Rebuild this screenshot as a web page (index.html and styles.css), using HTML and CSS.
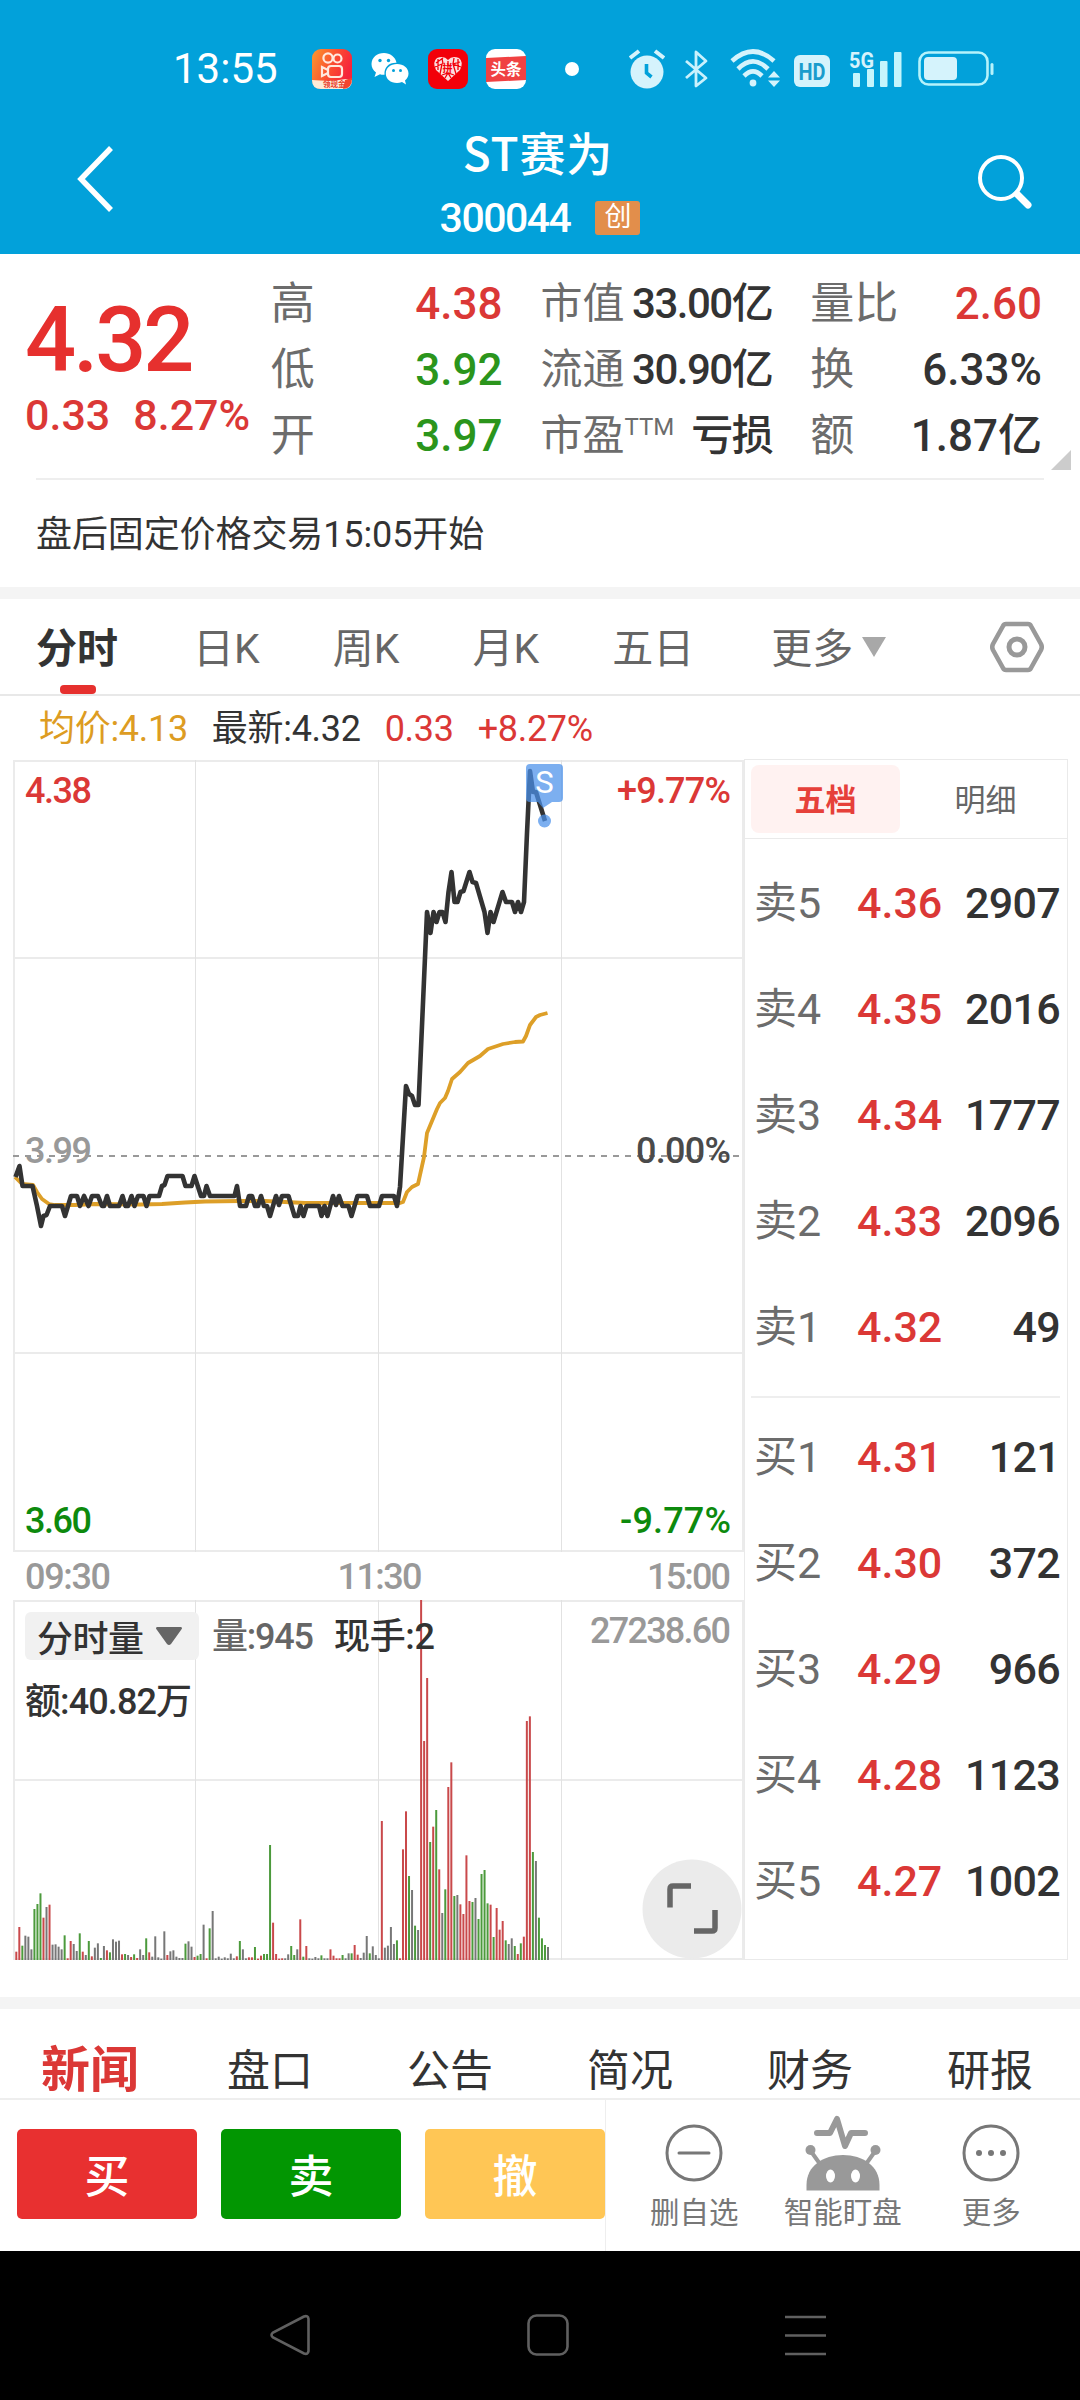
FILE: index.html
```html
<!DOCTYPE html>
<html lang="zh-CN">
<head>
  <meta charset="UTF-8" />
  <title>ST赛为 300044</title>
  <link rel="stylesheet" href="styles.css">
</head>
<body>
  <header class="top">
    <div class="status">
      <span class="clock">13:55</span>
      <svg class="app kuaishou" width="40" height="40" viewBox="0 0 40 40">
        <defs>
          <linearGradient id="ks" x1="0" y1="0" x2="1" y2="0.4">
            <stop offset="0" stop-color="#fb9a2c" />
            <stop offset="0.6" stop-color="#fb4a32" />
            <stop offset="1" stop-color="#f5243c" />
          </linearGradient>
        </defs>
        <rect width="40" height="40" rx="9" fill="url(#ks)" />
        <path d="M0 31 Q20 33 34 30 L40 31 Q40 40 31 40 H9 Q0 40 0 31z" fill="#fdebd8" />
        <path d="M33 31 L40 29 Q40 40 31 40z" fill="#f4452e" />
        <g fill="none" stroke="#ffe9df" stroke-width="2.2">
          <circle cx="16" cy="9" r="4.6" />
          <circle cx="25.5" cy="9.5" r="4" />
          <rect x="16" y="17" width="14" height="11" rx="3" />
          <path d="M16 21 L10 18 V27 L16 24" />
        </g>
        <text x="11" y="38" font-size="7.5" font-weight="700" fill="#e8402c">领现金</text>
      </svg>
      <svg class="app wechat" width="38" height="34" viewBox="0 0 38 34">
        <path d="M13 1 C6 1 0.5 5.600 0.500 12 C0.500 15.500 2.200 18.500 5 20.500 L3.500 25 L9 22.300 Q11 23 13.500 22.800 C13 15 18 10.500 25.500 10.800 C24.500 5 19 1 13 1z" fill="#fff" />
        <path d="M26 12 C19.500 12 14.800 16 14.800 21.500 C14.800 27 19.500 31 26 31 Q28.500 31 31 30 L35 32.500 L34 28.500 C36.300 26.700 37.500 24.300 37.500 21.500 C37.500 16 32.500 12 26 12z" fill="#fff" />
        <g fill="#02a1da">
          <circle cx="9" cy="8.500" r="1.700" /><circle cx="17.500" cy="8.500" r="1.700" />
          <circle cx="22.500" cy="18.500" r="1.500" /><circle cx="29.500" cy="18.500" r="1.500" />
        </g>
      </svg>
      <svg class="app heart" width="40" height="40" viewBox="0 0 40 40">
        <rect width="40" height="40" rx="9" fill="#f20009" />
        <path d="M20 32 L8 21 Q4 13 9 9 Q16 6 20 11 Q24 6 31 9 Q36 13 32 21z" fill="#fbdede" />
        <path d="M8 14 L15 9 M7 18 L14 15 L12 25 M14 9 L15 15 M26 9 L25 15 L33 18 M32 13 L25 15 L28 25 M14 26 L20 24 L26 26 M17 29 L20 24 L23 29 M10 10 L10 21 M30 10 V21 M20 12 V16" stroke="#f20009" stroke-width="1.300" fill="none" />
        <text x="14.500" y="23" font-size="10" font-weight="700" fill="#f20009">拼</text>
      </svg>
      <svg class="app toutiao" width="40" height="40" viewBox="0 0 40 40">
        <rect width="40" height="40" rx="9" fill="#fff" />
        <path d="M0 9 L40 7 V31 L0 33z" fill="#f04142" />
        <text x="4.500" y="26" font-size="15.500" font-weight="700" fill="#fff">头条</text>
      </svg>
      <span class="dot"></span>
      <svg class="sys alarm" width="36" height="40" viewBox="0 0 36 40">
        <circle cx="18" cy="23" r="16.500" fill="#d5f3fc" />
        <path d="M1 9 L10 2 M35 9 L26 2" stroke="#d5f3fc" stroke-width="4" />
        <path d="M17.500 15 V24 L22.500 28" stroke="#02a1da" stroke-width="3.600" fill="none" />
      </svg>
      <svg class="sys bluetooth" width="24" height="40" viewBox="0 0 24 40">
        <path d="M1 12 L21 29 L11 37 V3 L21 12 L1 29" fill="none" stroke="#c9f1fd" stroke-width="2.800" stroke-linejoin="round" />
      </svg>
      <svg class="sys wifi" width="50" height="40" viewBox="0 0 50 40">
        <g fill="none" stroke="#d5f3fc" stroke-width="4.600">
          <path d="M2 12 Q23 -7 44 12" />
          <path d="M8 20 Q23 5 38 20" />
          <path d="M14 27 Q23 18 32 27" />
        </g>
        <circle cx="23" cy="34" r="3.400" fill="#d5f3fc" />
        <path d="M44 22 L50 28.500 H38z M44 38 L50 31.500 H38z" fill="#d5f3fc" />
      </svg>
      <svg class="sys hd" width="36" height="32" viewBox="0 0 36 32">
        <rect width="36" height="32" rx="6" fill="#d5f3fc" />
        <text x="18" y="25" text-anchor="middle" textLength="27" lengthAdjust="spacingAndGlyphs" font-size="24" font-weight="700" fill="#1a9ccc">HD</text>
      </svg>
      <svg class="sys signal" width="53" height="48" viewBox="0 -4 53 48">
        <text x="0" y="18.500" font-size="22.500" font-weight="700" textLength="25" lengthAdjust="spacingAndGlyphs" fill="#d5f3fc">5G</text>
        <g fill="#c5f5fc">
          <rect x="4" y="24" width="7" height="14" rx="1" />
          <rect x="18" y="20" width="7" height="18" rx="1" />
          <rect x="31" y="12" width="7.500" height="26" rx="1" />
          <rect x="45" y="3" width="7.500" height="35" rx="1" />
        </g>
      </svg>
      <svg class="sys battery" width="76" height="36" viewBox="0 0 76 36">
        <rect x="1.500" y="1.500" width="68" height="32" rx="9" fill="none" stroke="#b5f2fb" stroke-width="2.600" />
        <rect x="6" y="6" width="33" height="23" rx="4" fill="#d5f3fc" />
        <rect x="72.500" y="12" width="3" height="12" rx="1.500" fill="#b5f2fb" />
      </svg>
    </div>
    <div class="titlebar">
      <svg class="back" width="40" height="68" viewBox="0 0 40 68">
        <path d="M35 3 L5 34 L35 65" fill="none" stroke="#fff" stroke-width="5.500" />
      </svg>
      <div class="title">
        <div class="name">ST赛为</div>
        <div class="code">300044 <span class="badge">创</span></div>
      </div>
      <svg class="search" width="56" height="56" viewBox="0 0 56 56">
        <circle cx="24" cy="24" r="21" fill="none" stroke="#fff" stroke-width="4" />
        <path d="M40 40 L51 51" stroke="#fff" stroke-width="7" stroke-linecap="round" />
      </svg>
    </div>
  </header>

  <section class="quote">
    <div class="price">
      <div class="last">4.32</div>
      <div class="change"><span>0.33</span><span>8.27%</span></div>
    </div>
    <dl>
      <div><dt>高</dt><dd class="red">4.38</dd></div>
      <div><dt>低</dt><dd class="green">3.92</dd></div>
      <div><dt>开</dt><dd class="green">3.97</dd></div>
    </dl>
    <dl class="tight">
      <div><dt>市值</dt><dd>33.00<b>亿</b></dd></div>
      <div><dt>流通</dt><dd>30.90<b>亿</b></dd></div>
      <div><dt>市盈<sup>TTM</sup></dt><dd><b>亏损</b></dd></div>
    </dl>
    <dl>
      <div><dt>量比</dt><dd class="red">2.60</dd></div>
      <div><dt>换</dt><dd>6.33%</dd></div>
      <div><dt>额</dt><dd>1.87<b>亿</b></dd></div>
    </dl>
    <i class="corner"></i>
  </section>
  <p class="notice">盘后固定价格交易15:05开始</p>

  <div class="band"></div>
  <nav class="periods">
    <span class="active">分时</span>
    <span>日K</span>
    <span>周K</span>
    <span>月K</span>
    <span>五日</span>
    <span>更多</span>
    <i class="caret"></i>
    <svg class="settings" width="54" height="52" viewBox="0 0 54 52">
      <path d="M16 3 H38 Q40 3 41 5 L51 23 Q52.500 26 51 29 L41 47 Q40 49 38 49 H16 Q14 49 13 47 L3 29 Q1.500 26 3 23 L13 5 Q14 3 16 3z" fill="none" stroke="#999" stroke-width="4.600" />
      <circle cx="27" cy="26" r="8" fill="none" stroke="#999" stroke-width="5" />
    </svg>
  </nav>
  <div class="summary">
    <span class="avg">均价:4.13</span>
    <span>最新:4.32</span>
    <span class="red">0.33</span>
    <span class="red">+8.27%</span>
  </div>

  <main class="market">
    <svg class="chart" width="744" height="1204" viewBox="0 756 744 1204">
      <g class="grid">
        <path d="M13 761 H744 M14 958 H744 M14 1353 H744 M14 1551 H744 M13 1601 H744 M14 1780 H744 M13 1959 H744" />
        <path d="M14 760 V1552 M743 760 V1552 M14 1600 V1960 M743 1600 V1960" />
        <path class="thin" d="M195.500 760 V1552 M378.500 760 V1552 M561.500 760 V1552 M195.500 1600 V1960 M378.500 1600 V1960 M561.500 1600 V1960" />
      </g>
      <path class="zero" d="M13 1156 H742" />
      <rect x="25" y="1612" width="174" height="48" rx="6" fill="#f1f1f1" />
      <g id="volume"></g>

      <g class="axis">
        <text class="red" x="25" y="803" textLength="67">4.38</text>
        <text class="mute" x="25" y="1163" textLength="67">3.99</text>
        <text class="down" x="25" y="1533" textLength="67">3.60</text>
        <text class="red end" x="731" y="803" textLength="114">+9.77%</text>
        <text class="zero-label end" x="731" y="1163" textLength="95">0.00%</text>
        <text class="down end" x="731" y="1533" textLength="111">-9.77%</text>
        <text class="mute" x="25" y="1589" textLength="86">09:30</text>
        <text class="mute mid" x="380" y="1589" textLength="85">11:30</text>
        <text class="mute end" x="731" y="1589" textLength="84">15:00</text>
        <text x="37" y="1652" textLength="107">分时量</text>
        <text class="soft" x="212" y="1649" textLength="102">量:945</text>
        <text x="334" y="1649" textLength="101">现手:2</text>
        <text x="25" y="1714" textLength="167">额:40.82万</text>
        <text class="mute end" x="731" y="1643" textLength="141">27238.60</text>
      </g>
      <path d="M157 1627 H181 Q183 1628 181 1630 L171 1644 Q169 1646 167 1644 L157 1630 Q155 1628 157 1627z" fill="#666" />

      <polyline class="average" points="15,1177 22,1184 33,1185 37,1192 42,1199 49,1204 55,1205 75,1205 95,1204 140,1204.500 162,1204 185,1202.500 205,1201.500 240,1201 265,1201 285,1202 305,1203 400,1203 403,1202 407,1192 412,1187 418,1184 424,1157 427,1133 432,1121 437,1109 440,1103 445,1098 448,1091 452,1079 460,1072 468,1063 480,1056 488,1049 503,1044 515,1042 523,1041.500 526,1036 530,1025 536,1017 540,1015 547.500,1013" />
      <polyline class="line" points="15.500,1177 19.500,1166 22.500,1186 32.500,1186 37,1206 41,1226 43.500,1216 46.500,1215 50,1206 62,1206 65,1216 68,1206 71,1196 77,1196 80,1206 84,1196 88.500,1206 92,1196 98,1196 102,1206 104,1206 107,1196 110,1206 119,1206 122.500,1196 125.500,1206 128,1206 131.500,1196 134.500,1206 138,1196 143.500,1196 146.500,1206 149.500,1196 159,1196 162,1186 164.500,1185 167.500,1176 182.500,1176 185.500,1186 191.500,1186 194.500,1176 201,1196 204,1196 206.500,1186 210,1196 234.500,1196 237,1186 240,1206 246,1206 249,1196 252,1196 255,1206 258,1206 261,1196 264,1206 267,1206 270,1216 273,1206 276,1196 279,1205 282,1196 288.500,1196 294.500,1216 298,1216 300.500,1206 303.500,1216 306.500,1206 319,1206 321.500,1216 324.500,1206 327.500,1216 333,1196 336,1205 339,1196 342.500,1206 348.500,1206 351.500,1216 357.500,1196 367,1196 370,1206 379,1206 382,1196 394,1196 397,1206 400,1187 406,1086 409,1094 412,1096 415,1105 418.500,1105 427,912 430.500,933 433.500,912 436.500,922 439.500,912 442.500,912 445.500,922 448.500,892 451.500,872 454.500,902 457.500,902 460.500,892 463.500,891 469.500,872 472.500,882 476,883 484.500,912 487.500,933 490.500,912 493.500,922 502.500,892 506,902 512,902 515,912 518,902 521,912 524,902 527,833 530,771 533,792 536,792 545,821" />
      <g class="marker">
        <path d="M530 764 H559 Q563 764 563 768 V798 Q563 802 559 802 H552 L543 808 L538 802 H530 Q526 802 526 798 V768 Q526 764 530 764z" />
        <circle cx="544.500" cy="821" r="6.500" />
        <text x="544.500" y="793">S</text>
      </g>

      <circle cx="692" cy="1909" r="49.500" fill="#ebebeb" />
      <path d="M670 1907.500 V1889 Q670 1886 673 1886 H691 M694 1931 H712 Q715 1931 715 1928 V1910" fill="none" stroke="#666" stroke-width="5.500" />
    </svg>

    <aside class="book">
      <div class="book-tabs"><span class="active">五档</span><span>明细</span></div>
      <div class="levels sell">
        <div><span>卖5</span><b>4.36</b><em>2907</em></div>
        <div><span>卖4</span><b>4.35</b><em>2016</em></div>
        <div><span>卖3</span><b>4.34</b><em>1777</em></div>
        <div><span>卖2</span><b>4.33</b><em>2096</em></div>
        <div><span>卖1</span><b>4.32</b><em>49</em></div>
      </div>
      <div class="levels buy">
        <div><span>买1</span><b>4.31</b><em>121</em></div>
        <div><span>买2</span><b>4.30</b><em>372</em></div>
        <div><span>买3</span><b>4.29</b><em>966</em></div>
        <div><span>买4</span><b>4.28</b><em>1123</em></div>
        <div><span>买5</span><b>4.27</b><em>1002</em></div>
      </div>
    </aside>
  </main>

  <div class="band"></div>
  <nav class="sections">
    <span class="active">新闻</span>
    <span>盘口</span>
    <span>公告</span>
    <span>简况</span>
    <span>财务</span>
    <span>研报</span>
  </nav>

  <div class="toolbar">
    <div class="trade">
      <button class="buy-btn">买</button>
      <button class="sell-btn">卖</button>
      <button class="cancel-btn">撤</button>
    </div>
    <div class="tool remove">
      <svg width="80" height="76" viewBox="0 0 80 76">
        <circle cx="40" cy="38" r="27" fill="none" stroke="#777" stroke-width="3" />
        <path d="M25 38 H55" stroke="#777" stroke-width="3" stroke-linecap="round" />
      </svg>
      <span>删自选</span>
    </div>
    <div class="tool robot">
      <svg width="80" height="76" viewBox="0 0 80 76">
        <path d="M14 18 H27 L34 4 L42 31 L48 18 H62" fill="none" stroke="#999" stroke-width="6" stroke-linecap="round" stroke-linejoin="round" />
        <path d="M3.500 75.500 V70 C3.500 51 20 40 40 40 S76.500 51 76.500 70 V75.500z" fill="#999" />
        <path d="M7 35 L17 49 M73 35 L63 49" stroke="#999" stroke-width="4" />
        <circle cx="7.500" cy="35" r="5" fill="#999" /><circle cx="72.500" cy="35" r="5" fill="#999" />
        <ellipse cx="27.500" cy="61" rx="4.500" ry="6.500" fill="#fff" /><ellipse cx="52.500" cy="61" rx="4.500" ry="6.500" fill="#fff" />
      </svg>
      <span>智能盯盘</span>
    </div>
    <div class="tool more">
      <svg width="80" height="76" viewBox="0 0 80 76">
        <circle cx="40" cy="38" r="27" fill="none" stroke="#777" stroke-width="3" />
        <circle cx="28" cy="38" r="3" fill="#777" /><circle cx="40" cy="38" r="3" fill="#777" /><circle cx="52" cy="38" r="3" fill="#777" />
      </svg>
      <span>更多</span>
    </div>
  </div>

  <footer class="sysnav">
    <svg width="42" height="42" viewBox="0 0 42 42"><path d="M35 2.500 L4 18.500 Q1 21 4 23.500 L35 39.500 Q39 41 39.500 37 V5 Q39 1 35 2.500z" /></svg>
    <svg width="42" height="42" viewBox="0 0 42 42"><rect x="1.500" y="1.500" width="39" height="39" rx="8" /></svg>
    <svg width="42" height="42" viewBox="0 0 42 42"><path d="M0 3 H41 M0 21.500 H41 M0 40 H41" /></svg>
  </footer>

  <script>
    // 每分钟一根: r 红 / g 绿 / k 灰 + 高度
    const VOLUME = ("r25 r99 g43 k73 k70 k32 g153 g168 g200 r127 k159 r166 k46 k47 k40 k32 g74 r5 r57 k48 k27 g80 r25 k15 g57 r11 k37 k50 g6 k42 " +
      "r29 g23 k62 k55 k58 r17 g18 k15 r9 g17 r6 k32 k15 g65 r23 k10 k71 k8 k4 k86 r15 k26 k29 k10 k6 k6 g49 k56 k40 r9 " +
      "g13 g18 k106 r5 g95 k147 k5 k10 k4 k8 k5 k19 k5 r11 g57 k32 k5 r8 r8 g39 r4 r13 g18 g18 g345 r112 r18 r4 r5 k5 " +
      "k17 g42 g15 k32 r122 g10 r42 k5 k4 k9 k5 g14 k5 k5 r32 r13 r5 r5 g15 k5 k20 g20 r45 r16 k6 k22 k72 g20 k41 k15 " +
      "k5 r417 k37 k43 k99 k48 g59 r5 r332 r446 g252 k210 g103 k90 r1080 r657 r846 g354 r400 g450 r272 k141 g212 r519 r593 g192 k195 r167 r138 r314 " +
      "r177 g174 k186 g123 g258 g270 g170 r166 g69 r156 r91 r117 g59 k48 k65 g42 r18 g50 r70 r717 r731 g324 k297 g127 g65 g45 k39").split(" ");
    const COLORS = {r: "#c9494b", g: "#4c9a3c", k: "#777"};
    const STEP = 3.021;

    const group = document.getElementById("volume");
    VOLUME.forEach((item, i) => {
      const h = Number(item.slice(1)) / 3;
      const bar = document.createElementNS("http://www.w3.org/2000/svg", "rect");
      bar.setAttribute("x", 15.3 + i * STEP);
      bar.setAttribute("y", 1960 - h);
      bar.setAttribute("width", 2);
      bar.setAttribute("height", h);
      bar.setAttribute("fill", COLORS[item[0]]);
      group.appendChild(bar);
    });
  </script>
</body>
</html>
```
FILE: styles.css
```css
* {
  box-sizing: border-box;
}

body {
  margin: 0;
  width: 1080px;
  height: 2400px;
  overflow: hidden;
  background: #fff;
  color: #333;
  font-family: Roboto, "Noto Sans CJK SC", sans-serif;
}

svg {
  display: block;
  flex: none;
}

.red {
  color: #db3836;
  fill: #db3836;
}

.green {
  color: #2b951c;
}

/* status bar + title */
.top {
  height: 254px;
  background: #02a1da;
  color: #fff;
}

.status {
  display: flex;
  align-items: center;
  height: 118px;
  padding: 20px 0 0 173px;
}

.clock {
  width: 139px;
  font-size: 42px;
  line-height: 50px;
}

.wechat { margin-left: 19px; }
.heart { margin-left: 19px; }
.toutiao { margin-left: 18px; }

.dot {
  width: 14px;
  height: 14px;
  margin: 0 50px 0 39px;
  border-radius: 50%;
  background: #fff;
}

.bluetooth { margin-left: 20px; }
.wifi { margin-left: 21px; }
.hd { margin: 4px 0 0 14px; }
.signal { margin-left: 19px; }
.battery { margin-left: 16px; }

.titlebar {
  display: flex;
  height: 136px;
  padding: 0 47px 0 76px;
}

.back {
  margin-top: 27px;
}

.title {
  width: 300px;
  margin-left: 272px;
  text-align: center;
}

.name {
  margin-top: 3px;
  font: 500 46px/60px "Noto Sans CJK SC", sans-serif;
  letter-spacing: 0.8px;
}

.code {
  display: flex;
  align-items: center;
  justify-content: center;
  margin-top: 12px;
  padding-left: 4px;
  font-size: 41px;
  font-weight: 500;
  line-height: 50px;
  letter-spacing: -1.5px;
}

.badge {
  width: 45px;
  height: 34px;
  margin-left: 25px;
  border-radius: 3px;
  background: #e28e4b;
  font-size: 27px;
  font-weight: 400;
  line-height: 33px;
  letter-spacing: 0;
}

.search {
  margin: 36px 0 0 auto;
}

/* quote */
.quote {
  position: relative;
  display: flex;
  height: 225px;
  padding: 17px 0 0 25px;
}

.quote::after {
  content: "";
  position: absolute;
  left: 36px;
  right: 36px;
  bottom: -1px;
  height: 2px;
  background: #eee;
}

.price {
  width: 246px;
  color: #e6302e;
}

.last {
  margin-top: 25px;
  font-size: 90px;
  font-weight: 500;
  line-height: 90px;
  letter-spacing: -3px;
}

.change {
  display: flex;
  gap: 23px;
  margin-top: 4px;
  color: #db3836;
  font-size: 43px;
  font-weight: 500;
  line-height: 50px;
}

dl {
  width: 232px;
  margin: 0 38px 0 0;
}

dl div {
  display: flex;
  justify-content: space-between;
  height: 66px;
  font-size: 44px;
  line-height: 66px;
  white-space: nowrap;
}

dt {
  color: #6c6c6c;
}

dd {
  margin: 0;
  font-weight: 500;
}

dd b {
  font-weight: 500;
}

.tight div {
  font-size: 42px;
}

.tight dd {
  letter-spacing: -1.5px;
}

sup {
  font-size: 24px;
  line-height: 0;
  vertical-align: 15px;
}

.corner {
  position: absolute;
  right: 9px;
  bottom: 9px;
  border-left: 20px solid transparent;
  border-bottom: 20px solid #ccc;
}

.notice {
  height: 108px;
  margin: 0;
  padding-left: 36px;
  font-size: 36px;
  line-height: 113px;
  letter-spacing: -0.1px;
}

.band {
  height: 12px;
  background: #f4f4f4;
}

/* chart period tabs */
.periods {
  display: flex;
  align-items: center;
  height: 97px;
  padding: 0 36px;
  border-bottom: 2px solid #e8e8e8;
  color: #666;
  font-size: 41px;
}

.periods span {
  height: 95px;
  margin-right: 73px;
  line-height: 100px;
}

.periods .active {
  position: relative;
  margin-right: 75px;
  color: #333;
  font-weight: 700;
}

.periods .active::after {
  content: "";
  position: absolute;
  left: 24px;
  bottom: 0;
  width: 36px;
  height: 9px;
  border-radius: 4px;
  background: #e6302e;
}

.periods span:nth-child(5) {
  margin-right: 77px;
}

.periods span:nth-child(6) {
  margin-right: 9px;
}

.caret {
  border: 12px solid transparent;
  border-top: 20px solid #a8a8a8;
  border-bottom: 0;
}

.settings {
  margin-left: auto;
}

.summary {
  display: flex;
  gap: 24px;
  height: 60px;
  padding-left: 39px;
  font-size: 36px;
  line-height: 66px;
  letter-spacing: -0.3px;
}

.avg {
  color: #dd9c22;
}

/* chart */
.market {
  display: flex;
  height: 1241px;
}

.grid path {
  fill: none;
  stroke: #ebebeb;
  stroke-width: 2;
}

.grid .thin {
  stroke: #e2e2e2;
  stroke-width: 1;
}

.zero {
  stroke: #999;
  stroke-width: 2;
  stroke-dasharray: 6 6;
}

.axis text {
  font-size: 36px;
  font-weight: 500;
  fill: #333;
}

.axis .red { fill: #db3836; }
.axis .down { fill: #0d8a0d; }
.axis .mute { fill: #999; }
.axis .soft { fill: #666; }
.axis .zero-label { fill: #4a4a4a; }
.axis .end { text-anchor: end; }
.axis .mid { text-anchor: middle; }

.line,
.average {
  fill: none;
  stroke: #333;
  stroke-width: 4.6;
  stroke-linejoin: round;
}

.average {
  stroke: #dd9f28;
  stroke-width: 3.8;
}

.marker {
  fill: #4a90ea;
  fill-opacity: 0.72;
}

.marker text {
  fill: #fff;
  fill-opacity: 1;
  font-size: 31px;
  text-anchor: middle;
}

/* order book */
.book {
  width: 324px;
  height: 1201px;
  margin-top: 3px;
  border: 1px solid #eaeaea;
}

.book-tabs {
  display: flex;
  height: 79px;
  padding: 5px 6px;
  border-bottom: 1px solid #eaeaea;
  color: #666;
  font-size: 31px;
  line-height: 71px;
  text-align: center;
}

.book-tabs span {
  width: 149px;
  height: 68px;
}

.book-tabs span + span {
  margin-left: 11px;
}

.book-tabs .active {
  border-radius: 8px;
  background: #fff2f1;
  color: #e6403a;
  font-weight: 700;
}

.levels div {
  display: flex;
  height: 106px;
  padding: 0 7px 0 9px;
  line-height: 106px;
  font-size: 43px;
}

.levels span {
  width: 103px;
  color: #6c6c6c;
}

.levels b {
  font-weight: 500;
  color: #db3836;
}

.levels em {
  margin-left: auto;
  font-style: normal;
  font-weight: 500;
  letter-spacing: -0.7px;
}

.sell {
  height: 557px;
  padding-top: 11px;
}

.buy {
  margin: 0 7px 0 6px;
  padding-top: 6px;
  border-top: 2px solid #eee;
}

.buy div {
  padding: 0 0 0 3px;
}

/* news tabs */
.sections {
  display: grid;
  grid-template-columns: repeat(6, 180px);
  height: 89px;
  font-size: 43px;
  line-height: 124px;
  text-align: center;
}

.sections .active {
  color: #db3836;
  font-size: 49px;
  font-weight: 700;
}

/* bottom bar */
.toolbar {
  display: flex;
  height: 153px;
  border-top: 2px solid #eee;
  background: #fff;
}

.trade {
  display: flex;
  gap: 24px;
  width: 606px;
  padding: 29px 0 0 17px;
  border-right: 1px solid #eee;
}

button {
  width: 180px;
  height: 90px;
  padding: 0;
  border: none;
  border-radius: 5px;
  color: #fff;
  font: 500 45px/90px "Noto Sans CJK SC", sans-serif;
}

.buy-btn { background: #e83030; }
.sell-btn { background: #029602; }
.cancel-btn { background: #ffc655; }

.tool {
  display: flex;
  flex-direction: column;
  align-items: center;
  width: 148.500px;
  padding-top: 15px;
  color: #777;
  font-size: 29.5px;
}

.tool span {
  margin-top: 2px;
  line-height: 41px;
}

.remove { margin-left: 14px; }

/* android navigation */
.sysnav {
  display: flex;
  gap: 216px;
  height: 149px;
  padding: 63px 0 0 269px;
  background: #000;
}

.sysnav path,
.sysnav rect {
  fill: none;
  stroke: #606060;
  stroke-width: 2.6;
}
```
